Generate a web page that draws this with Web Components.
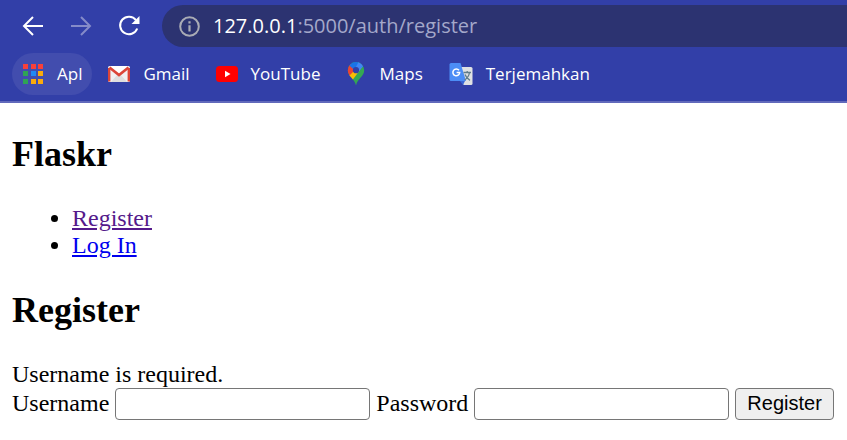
<!DOCTYPE html>
<html lang="id">
<head>
<meta charset="utf-8">
<title>Register - Flaskr</title>
<style>
  body { margin: 0; background: #fff; color: #000; font: 24px/27px "Liberation Serif", serif; }
</style>
</head>
<body>
<browser-bar>
  <tool-button slot="buttons" label="Back"><svg width="22" height="22" viewBox="0 0 22 22" fill="none" stroke="#fff" stroke-width="2"><path d="M21 11H2.500M11 2L2 11l9 9"/></svg></tool-button>
  <tool-button slot="buttons" label="Forward" inactive><svg width="22" height="22" viewBox="0 0 22 22" fill="none" stroke="#858bc9" stroke-width="2"><path d="M1 11h18.500M11 2l9 9-9 9"/></svg></tool-button>
  <tool-button slot="buttons" label="Reload"><svg width="22" height="22" viewBox="0 0 22 22"><path d="M18 5.200A8.800 8.800 0 1 0 19.200 13.500" fill="none" stroke="#fff" stroke-width="2"/><path d="M21.500 1v8H13.500z" fill="#fff"/></svg></tool-button>
  <address-field slot="address" host="127.0.0.1" rest=":5000/auth/register"></address-field>

  <bookmark-link slot="marks" active label="Apl"><svg slot="icon" width="22" height="22" viewBox="0 0 22 22"><path d="M1 1h5v5H1zM9 1h5v5H9zM16 1h5v5h-5z" fill="#f8403a"/><path d="M1 8h5v5H1zM1 16h5v5H1z" fill="#2fa454"/><path d="M9 8h5v5H9z" fill="#2289f5"/><path d="M16 8h5v5h-5zM9 16h5v5H9zM16 16h5v5h-5z" fill="#fbab0c"/></svg></bookmark-link>
  <bookmark-link slot="marks" label="Gmail"><svg slot="icon" width="22" height="22" viewBox="0 0 22 22"><rect x="0" y="3" width="22" height="16" rx="1.500" fill="#f1f0f1"/><path d="M3 19l7-8h2l7 8z" fill="#dedede"/><path d="M2 3h18l-9 8z" fill="#fff"/><path d="M1.200 18.500V5M20.800 5v13.500" stroke="#dc4538" stroke-width="2.400"/><path d="M1.500 4.500L11 12l9.500-7.500" fill="none" stroke="#dc4538" stroke-width="2.600"/></svg></bookmark-link>
  <bookmark-link slot="marks" label="YouTube"><svg slot="icon" width="22" height="22" viewBox="0 0 22 22"><rect x="0" y="3" width="22" height="16" rx="3.500" fill="#f00"/><path d="M9 7.800v6.400l5.500-3.200z" fill="#fff"/></svg></bookmark-link>
  <bookmark-link slot="marks" label="Maps"><svg slot="icon" width="20" height="24" viewBox="2 0 20 24"><defs><clipPath id="pin"><path d="M11 0a8.200 8.200 0 0 0-8.200 8.200c0 6.300 6.700 8 8.200 15.300 1.500-7.300 8.200-9 8.200-15.300A8.200 8.200 0 0 0 11 0z"/></clipPath></defs><g clip-path="url(#pin)"><path d="M0 0h22v24H0z" fill="#34a853"/><path d="M0 17L11 4l4 4L6 20z" fill="#fbbc04"/><path d="M0 0h5l5 8-6 6H0z" fill="#ea4335"/><path d="M4 3.300L8.200 7 18 5 14 0H5z" fill="#1a73e8"/><path d="M13.500 0L10 7l3 1.500 6-6z" fill="#4285f4"/><path d="M14 6.500L19 3l-7 9z" fill="#4285f4"/></g><circle cx="11" cy="8.200" r="3.100" fill="#323fa8"/></svg></bookmark-link>
  <bookmark-link slot="marks" label="Terjemahkan"><svg slot="icon" width="24" height="24" viewBox="0 0 24 24"><path d="M8 5h14q1.500 0 1.500 1.500v15q0 1.500-1.500 1.500h-7.500z" fill="#dfe1e3"/><path d="M11 19h5l-2 4z" fill="#3867d6"/><path d="M2 1h9.500L17 19H2q-1.500 0-1.500-1.500v-15Q.5 1 2 1z" fill="#4c8df6"/><path d="M10 8.300A3.400 3.400 0 1 0 10.700 10.500H7.600" fill="none" stroke="#fff" stroke-width="1.500"/><path d="M14.500 10.500H22M18.200 9v1.500M20.500 10.500q-.8 5-5 7.500M16 12.500q1.500 4 5 5.800" fill="none" stroke="#607d8b" stroke-width="1.300"/></svg></bookmark-link>
</browser-bar>
<flaskr-page heading="Flaskr">
  <nav-list slot="nav"></nav-list>
  <register-form message="Username is required."></register-form>
</flaskr-page>

<script>
const define = (name, render) => customElements.define(name, class extends HTMLElement {
  constructor() {
    super();
    this.attachShadow({ mode: "open" }).innerHTML = render(this);
  }
});

define("browser-bar", () => `
  <style>
    :host { display: block; background: #323fa8; color: #fff; border-bottom: 2px solid #6169bb; font: 17px/24px "Open Sans", "Noto Sans", sans-serif; overflow: hidden; }
    .tools { display: flex; align-items: center; gap: 22px; padding: 5px 0 0 22px; }
    .buttons { display: flex; gap: 26px; }
    .marks { display: flex; align-items: center; gap: 6px; padding: 6px 12px; }
  </style>
  <div class="tools"><div class="buttons"><slot name="buttons"></slot></div><slot name="address"></slot></div>
  <nav class="marks" aria-label="Bookmarks"><slot name="marks"></slot></nav>`);

define("tool-button", el => `
  <style>
    :host { display: block; flex: none; }
    button { display: flex; padding: 0; border: 0; background: none; }
  </style>
  <button type="button" aria-label="${el.getAttribute("label")}" ${el.hasAttribute("inactive") ? "disabled" : ""}><slot></slot></button>`);

define("address-field", el => `
  <style>
    :host { display: flex; flex: 1; align-items: center; gap: 13px; box-sizing: border-box; height: 42px; padding: 0 17px; border-radius: 21px 0 0 21px; background: #2c3371; font-size: 20px; color: #a4a8ca; white-space: nowrap; }
    svg { flex: none; }
    b { font-weight: 400; color: #fff; }
    .url { flex: 1; outline: 0; }
  </style>
  <svg width="21" height="21" viewBox="0 0 21 21"><circle cx="10.500" cy="10.500" r="9.300" fill="none" stroke="#a9abb5" stroke-width="2"/><path d="M9.400 5.300h2.200v2.200H9.400zM9.400 9.200h2.200v6.300H9.400z" fill="#a9abb5"/></svg>
  <div class="url" role="textbox" contenteditable="true" spellcheck="false" aria-label="Address"><b>${el.getAttribute("host")}</b>${el.getAttribute("rest")}</div>`);

define("bookmark-link", el => `
  <style>
    :host { display: block; flex: none; }
    a { display: flex; align-items: center; gap: 13px; height: 42px; padding: 0 10px; border-radius: 21px; color: #fff; text-decoration: none; }
    :host([active]) a { background: #424dae; }
  </style>
  <a href="#"><slot name="icon"></slot><span>${el.getAttribute("label")}</span></a>`);

define("flaskr-page", el => `
  <style>
    :host { display: block; padding: 31px 12px 12px; }
    h1 { margin: 0; font-size: 36px; line-height: 41px; }
    nav { margin: 30px 0 31px; }
  </style>
  <h1>${el.getAttribute("heading")}</h1>
  <nav><slot name="nav"></slot></nav>
  <slot></slot>`);

define("nav-list", () => `
  <style>
    :host { display: block; }
    ul { margin: 0; padding-left: 60px; }
    a { color: #00e; }
    .seen { color: #551a8b; }
  </style>
  <ul><li><a class="seen" href="#register">Register</a></li><li><a href="#login">Log In</a></li></ul>`);

define("register-form", el => `
  <style>
    :host { display: block; }
    h2 { margin: 0 0 30px; font-size: 36px; line-height: 41px; }
    form { display: flex; flex-wrap: wrap; align-items: center; gap: 6px; }
    label { padding-bottom: 2px; }
    input, button { box-sizing: border-box; height: 32px; border: 1px solid #767676; border-radius: 4px; font: 20px/24px "Liberation Sans", Arial, sans-serif; color: #000; }
    input { width: 255px; padding: 2px 3px; background: #fff; }
    button { padding: 0 11px 2px; background: #efefef; }
  </style>
  <h2>Register</h2>
  <div role="alert">${el.getAttribute("message")}</div>
  <form>
    <label for="username">Username</label>
    <input id="username" name="username">
    <label for="password">Password</label>
    <input id="password" name="password" type="password">
    <button type="submit">Register</button>
  </form>`);
</script>
</body>
</html>
